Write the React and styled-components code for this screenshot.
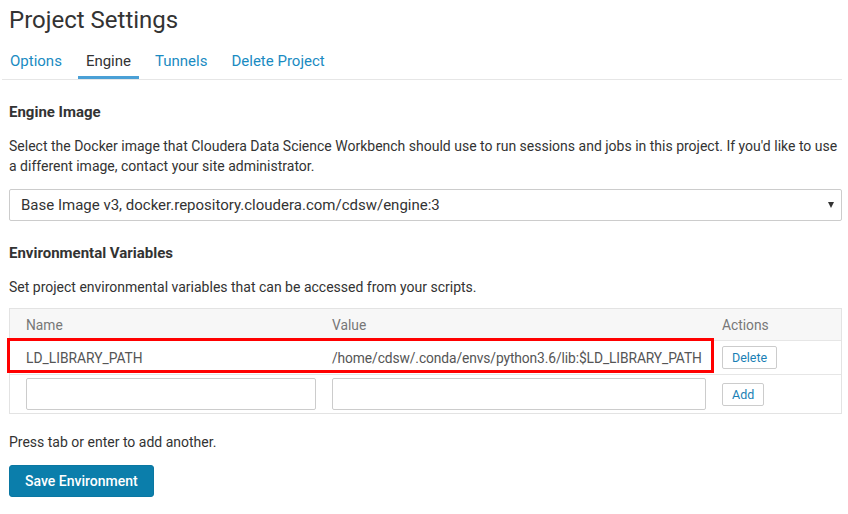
import React from "react";
import styled, { createGlobalStyle } from "styled-components";

const GlobalStyle = createGlobalStyle`
  body {
    margin: 0;
    background: #fff;
    font-family: Roboto, "Liberation Sans", Arial, sans-serif;
    color: #333;
  }
`;

const Page = styled.div`
  padding: 0 6px 0 9px;
`;

const Title = styled.h1`
  margin: 0;
  padding-top: 4px;
  font-size: 24px;
  font-weight: 400;
  line-height: 32px;
  color: #333;
`;

const Tabs = styled.nav`
  display: flex;
  gap: 8px;
  margin: 17px 0 0 -7px;
  border-bottom: 1px solid #e6e6e6;
`;

const Tab = styled.a`
  padding: 0 8px;
  height: 23px;
  line-height: 17px;
  font-size: 15px;
  color: ${(p) => (p.$active ? "#333" : "#1a8bc2")};
  border-bottom: 3px solid ${(p) => (p.$active ? "#4aa0d6" : "transparent")};
  text-decoration: none;
  cursor: pointer;
`;

const SectionTitle = styled.h3`
  margin: 22px 0 0;
  font-size: 15px;
  font-weight: 700;
  line-height: 20px;
  color: #333;
`;

const Help = styled.p`
  margin: 14px 0 0;
  font-size: 14px;
  line-height: 20px;
  color: #333;
`;

const SelectBox = styled.div`
  margin-top: 13px;
  height: 30px;
  border: 1px solid #ccc;
  border-radius: 2px;
  display: flex;
  align-items: center;
  padding: 0 11px;
  font-size: 15px;
  color: #333;
`;

const Caret = styled.span`
  margin-left: auto;
  width: 0;
  height: 0;
  border-left: 3px solid transparent;
  border-right: 3px solid transparent;
  border-top: 6px solid #333;
  margin-right: -4px;
`;

const Table = styled.div`
  margin-top: 11px;
  border: 1px solid #e3e3e3;
  font-size: 13.8px;
`;

const Row = styled.div`
  position: relative;
  display: grid;
  grid-template-columns: 314px 390px 1fr;
  align-items: center;
  height: ${(p) => p.$h}px;
  background: ${(p) => (p.$head ? "#f7f7f7" : "#fff")};
  border-top: ${(p) => (p.$head ? "none" : "1px solid #e6e6e6")};
  color: ${(p) => (p.$head ? "#777" : "#555")};
`;

const Cell = styled.div`
  padding: 0 8px 0 ${(p) => (p.$first ? 16 : 8)}px;
  white-space: nowrap;
  overflow: hidden;
  letter-spacing: ${(p) => (p.$tight ? "-0.1px" : "normal")};
`;

const Highlight = styled.div`
  position: absolute;
  left: -3px;
  top: -3px;
  width: 707px;
  height: 35px;
  box-sizing: border-box;
  border: 3px solid #f00;
  pointer-events: none;
`;

const Input = styled.input`
  display: block;
  box-sizing: border-box;
  width: 100%;
  height: 32px;
  border: 1px solid #ccc;
  border-radius: 2px;
  font-family: inherit;
  font-size: 14px;
  padding: 0 8px;
`;

const SmallButton = styled.button`
  height: 23px;
  padding: 0 9px;
  background: #fff;
  border: 1px solid #ccc;
  border-radius: 2px;
  font-family: inherit;
  font-size: 12.5px;
  color: #1a7fb5;
  cursor: pointer;
`;

const Note = styled.p`
  margin: 18px 0 0;
  font-size: 14px;
  line-height: 20px;
  color: #333;
`;

const PrimaryButton = styled.button`
  margin-top: 13px;
  height: 32px;
  padding: 0 15px;
  background: #0b7eab;
  border: 1px solid #0a77a2;
  border-radius: 3px;
  font-family: inherit;
  font-size: 14px;
  font-weight: 500;
  color: #fff;
  cursor: pointer;
`;

export default function App() {
  return (
    <Page>
      <GlobalStyle />
      <Title>Project Settings</Title>
      <Tabs>
        <Tab>Options</Tab>
        <Tab $active>Engine</Tab>
        <Tab>Tunnels</Tab>
        <Tab>Delete Project</Tab>
      </Tabs>

      <SectionTitle>Engine Image</SectionTitle>
      <Help>
        Select the Docker image that Cloudera Data Science Workbench should use
        to run sessions and jobs in this project. If you'd like to use a
        different image, contact your site administrator.
      </Help>
      <SelectBox>
        Base Image v3, docker.repository.cloudera.com/cdsw/engine:3
        <Caret />
      </SelectBox>

      <SectionTitle>Environmental Variables</SectionTitle>
      <Help>
        Set project environmental variables that can be accessed from your
        scripts.
      </Help>

      <Table>
        <Row $head $h={31}>
          <Cell $first>Name</Cell>
          <Cell>Value</Cell>
          <Cell>Actions</Cell>
        </Row>
        <Row $h={33}>
          <Cell $first>LD_LIBRARY_PATH</Cell>
          <Cell $tight>/home/cdsw/.conda/envs/python3.6/lib:$LD_LIBRARY_PATH</Cell>
          <Cell>
            <SmallButton>Delete</SmallButton>
          </Cell>
          <Highlight />
        </Row>
        <Row $h={38}>
          <Cell $first>
            <Input />
          </Cell>
          <Cell>
            <Input />
          </Cell>
          <Cell>
            <SmallButton>Add</SmallButton>
          </Cell>
        </Row>
      </Table>

      <Note>Press tab or enter to add another.</Note>
      <PrimaryButton>Save Environment</PrimaryButton>
    </Page>
  );
}
